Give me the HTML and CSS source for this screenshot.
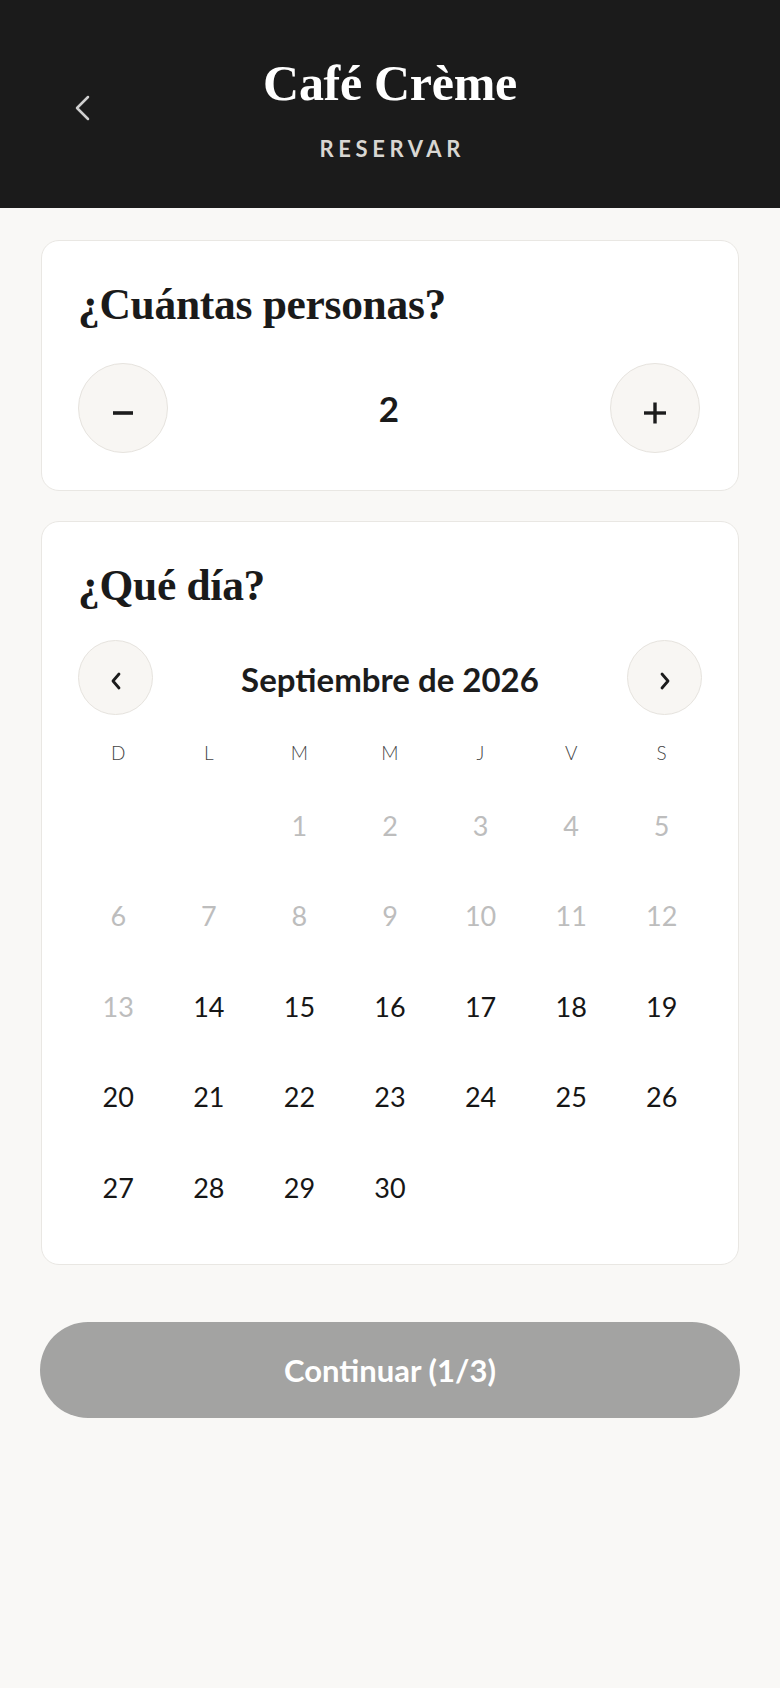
FILE: index.html
```html
<!DOCTYPE html>
<html lang="es">
<head>
<meta charset="utf-8">
<title>Café Crème · Reservar</title>
<link rel="stylesheet" href="styles.css">
</head>
<body>
<header class="topbar">
  <button class="back" aria-label="Volver">
    <svg width="16" height="26" viewBox="0 0 16 26"><polyline points="14,2 3,13 14,24" fill="none" stroke="#cfcfcf" stroke-width="2.5" stroke-linecap="round" stroke-linejoin="round"/></svg>
  </button>
  <div class="brand">
    <h1 class="title">Café Crème</h1>
    <div class="subtitle">RESERVAR</div>
  </div>
  <div class="spacer"></div>
</header>

<main class="content">
  <section class="card card-people">
    <h2 class="heading">¿Cuántas personas?</h2>
    <div class="stepper">
      <button class="round-btn big" aria-label="Menos">
        <svg width="24" height="24" viewBox="0 0 24 24"><line x1="2" y1="12" x2="22" y2="12" stroke="#1c1c1c" stroke-width="3.6"/></svg>
      </button>
      <div class="count">2</div>
      <button class="round-btn big" aria-label="Más">
        <svg width="24" height="24" viewBox="0 0 24 24"><line x1="1" y1="12" x2="23" y2="12" stroke="#1c1c1c" stroke-width="3.4"/><line x1="12" y1="1.5" x2="12" y2="22.5" stroke="#1c1c1c" stroke-width="3.4"/></svg>
      </button>
    </div>
  </section>

  <section class="card card-date">
    <h2 class="heading">¿Qué día?</h2>
    <div class="month-nav">
      <button class="round-btn small" aria-label="Mes anterior">
        <svg width="12" height="18" viewBox="0 0 12 18"><polyline points="9,2 3,9 9,16" fill="none" stroke="#1c1c1c" stroke-width="2.8" stroke-linecap="round" stroke-linejoin="round"/></svg>
      </button>
      <div class="month">Septiembre de 2026</div>
      <button class="round-btn small" aria-label="Mes siguiente">
        <svg width="12" height="18" viewBox="0 0 12 18"><polyline points="3,2 9,9 3,16" fill="none" stroke="#1c1c1c" stroke-width="2.8" stroke-linecap="round" stroke-linejoin="round"/></svg>
      </button>
    </div>
    <div class="weekdays">
      <span>D</span><span>L</span><span>M</span><span>M</span><span>J</span><span>V</span><span>S</span>
    </div>
    <div class="days">
      <span></span><span></span>
      <span class="off">1</span><span class="off">2</span><span class="off">3</span><span class="off">4</span><span class="off">5</span>
      <span class="off">6</span><span class="off">7</span><span class="off">8</span><span class="off">9</span><span class="off">10</span><span class="off">11</span><span class="off">12</span>
      <span class="off">13</span><span>14</span><span>15</span><span>16</span><span>17</span><span>18</span><span>19</span>
      <span>20</span><span>21</span><span>22</span><span>23</span><span>24</span><span>25</span><span>26</span>
      <span>27</span><span>28</span><span>29</span><span>30</span><span></span><span></span><span></span>
    </div>
  </section>

  <button class="continue" disabled>Continuar (1/3)</button>
</main>
</body>
</html>
```

FILE: styles.css
```css
* { box-sizing: border-box; }

html, body {
  margin: 0;
  padding: 0;
}

body {
  background: #f9f8f6;
  font-family: "Lato", "Noto Sans", sans-serif;
  color: #1a1a1a;
  min-height: 1688px;
}

button {
  font-family: inherit;
  border: none;
  background: none;
  padding: 0;
  cursor: pointer;
}

.topbar {
  background: #1b1b1b;
  display: grid;
  grid-template-columns: 1fr auto 1fr;
  align-items: center;
  padding: 58px 0 49px;
}

.back {
  justify-self: start;
  margin-left: 74px;
  display: flex;
  align-items: center;
  justify-content: center;
  margin-top: -2px;
}

.brand {
  text-align: center;
}

.title {
  margin: 0;
  font-family: "Liberation Serif", "DejaVu Serif", serif;
  font-weight: 700;
  font-size: 50px;
  line-height: 50px;
  color: #ffffff;
  letter-spacing: -0.3px;
}

.subtitle {
  margin-top: 30px;
  font-size: 22px;
  line-height: 21px;
  font-weight: 700;
  letter-spacing: 4.6px;
  padding-left: 4.6px;
  color: #d8d6d2;
}

.content {
  padding: 32px 41px 0;
}

.card {
  background: #ffffff;
  border: 1px solid #e9e7e3;
  border-radius: 18px;
  padding: 39px 36px 37px;
}

.card-people {
  margin-bottom: 30px;
}

.card-date {
  padding-bottom: 31px;
}

.heading {
  margin: 0;
  font-family: "Liberation Serif", "DejaVu Serif", serif;
  font-weight: 700;
  font-size: 43.5px;
  line-height: 48px;
  color: #1a1a1a;
  letter-spacing: -0.3px;
}

.stepper {
  margin-top: 35px;
  display: flex;
  align-items: center;
  justify-content: space-between;
  padding-right: 2px;
}

.round-btn {
  border-radius: 50%;
  background: #f8f6f3;
  border: 1.5px solid #e6e3de;
  display: flex;
  align-items: center;
  justify-content: center;
}

.round-btn.big {
  width: 90px;
  height: 90px;
  padding-top: 10px;
}

.round-btn.small {
  width: 75px;
  height: 75px;
  padding-top: 7px;
}

.count {
  font-size: 35px;
  line-height: 40px;
  font-weight: 700;
  color: #1a1a1a;
}

.month-nav {
  margin-top: 31px;
  display: flex;
  align-items: center;
  justify-content: space-between;
}

.month {
  font-size: 33px;
  line-height: 40px;
  font-weight: 700;
  color: #1c1c1c;
  margin-top: 2px;
}

.weekdays,
.days {
  display: grid;
  grid-template-columns: repeat(7, 1fr);
  margin: 0 -5px;
  text-align: center;
}

.weekdays {
  margin-top: 9px;
  height: 56px;
  align-items: center;
  font-size: 19px;
  font-weight: 300;
  color: #444444;
}

.days {
  grid-auto-rows: 90.5px;
  align-items: center;
  font-size: 27px;
  color: #161616;
}

.days .off {
  color: #bdbdbd;
}

.continue {
  display: block;
  width: calc(100% + 2px);
  margin: 57px -1px 0;
  height: 96px;
  border-radius: 48px;
  background: #a3a3a2;
  color: #ffffff;
  font-size: 31px;
  font-weight: 700;
  cursor: default;
}
```
